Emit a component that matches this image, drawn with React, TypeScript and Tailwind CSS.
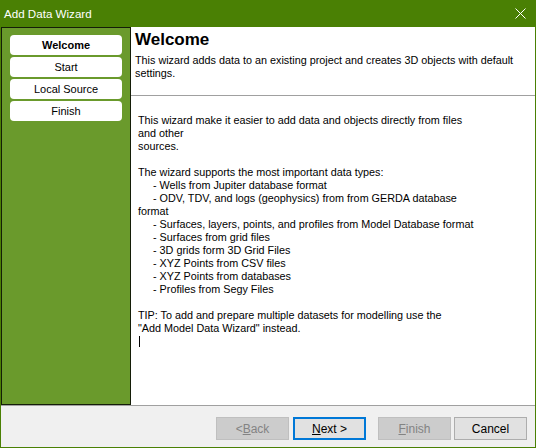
import React from 'react';

const body = '"Tahoma", "Liberation Sans", Arial, sans-serif';
const ui = '"Segoe UI", "Liberation Sans", Arial, sans-serif';

const steps = ['Welcome', 'Start', 'Local Source', 'Finish'];

// lines of the rich text box; indent = list item
const lines: { text: string; indent?: boolean }[] = [
  { text: 'This wizard make it easier to add data and objects directly from files' },
  { text: 'and other' },
  { text: 'sources.' },
  { text: '' },
  { text: 'The wizard supports the most important data types:' },
  { text: '- Wells from Jupiter database format', indent: true },
  { text: '- ODV, TDV, and logs (geophysics) from from GERDA database', indent: true },
  { text: 'format' },
  { text: '- Surfaces, layers, points, and profiles from Model Database format', indent: true },
  { text: '- Surfaces from grid files', indent: true },
  { text: '- 3D grids form 3D Grid Files', indent: true },
  { text: '- XYZ Points from CSV files', indent: true },
  { text: '- XYZ Points from databases', indent: true },
  { text: '- Profiles from Segy Files', indent: true },
  { text: '' },
  { text: 'TIP: To add and prepare multiple datasets for modelling use the' },
  { text: '"Add Model Data Wizard" instead.' },
];

function Btn({
  label,
  accel,
  rest,
  disabled,
  primary,
}: {
  label?: string;
  accel?: string;
  rest?: string;
  disabled?: boolean;
  primary?: boolean;
}) {
  const cls = disabled
    ? 'bg-[#cccccc] border border-[#bfbfbf] text-[#838383]'
    : primary
    ? 'bg-[#e1e1e1] border-2 border-[#0078d7] text-black'
    : 'bg-[#e1e1e1] border border-[#adadad] text-black';
  return (
    <div
      className={`w-[73px] h-[23px] flex items-center justify-center text-[12px] ${cls}`}
      style={{ fontFamily: ui }}
    >
      {label}
      {accel && <span className="underline">{accel}</span>}
      {rest}
    </div>
  );
}

export default function App() {
  return (
    <div className="w-[536px] h-[448px] flex flex-col bg-[#4a8004] overflow-hidden select-none">
      {/* title bar */}
      <div className="h-[27px] shrink-0 flex items-center justify-between pl-[4px] pr-[10px]">
        <span className="text-white text-[11.6px]" style={{ fontFamily: ui }}>
          Add Data Wizard
        </span>
        <svg width="11" height="11" viewBox="0 0 11 11" className="mb-[1px]">
          <path d="M0.5 0.5 L10.5 10.5 M10.5 0.5 L0.5 10.5" stroke="white" strokeWidth="1" />
        </svg>
      </div>

      <div className="flex-1 flex flex-col mx-px mb-px min-h-0">
        <div className="flex-1 flex min-h-0">
          {/* sidebar */}
          <div className="w-[130px] shrink-0 bg-[#6a9a2c] border border-[#141d08] pt-[7px] pl-[8px] flex flex-col gap-[2px]">
            {steps.map((s, i) => (
              <div
                key={s}
                className={`w-[112px] h-[20px] bg-white rounded-[4px] flex items-center justify-center text-[11px] text-black ${
                  i === 0 ? 'font-bold' : ''
                }`}
                style={{ fontFamily: body }}
              >
                {s}
              </div>
            ))}
          </div>

          {/* content */}
          <div className="flex-1 bg-white flex flex-col" style={{ fontFamily: body }}>
            <div className="pt-[3px] pl-[4px] pr-[10px]">
              <div className="text-[17px] leading-[20px] font-bold text-black" style={{ fontFamily: '"Liberation Sans", Arial, sans-serif' }}>
                Welcome
              </div>
              <div className="mt-[4px] text-[10.8px] leading-[13px] text-black">
                This wizard adds data to an existing project and creates 3D objects with default settings.
              </div>
            </div>
            <div className="mt-[15px] h-px bg-[#a0a0a0]" />
            <div className="pt-[18px] pl-[7px] text-[10.8px] leading-[13px] text-black">
              {lines.map((l, i) => (
                <div key={i} className={`h-[13px] whitespace-pre ${l.indent ? 'pl-[15px]' : ''}`}>
                  {l.text}
                </div>
              ))}
              <div className="h-[13px] flex items-center">
                <div className="w-px h-[11px] bg-black ml-px" />
              </div>
            </div>
          </div>
        </div>

        {/* button bar */}
        <div className="h-[42px] shrink-0 bg-[#f0f0f0] border-t border-[#a0a0a0] flex justify-end pt-[11px] pr-[8px]">
          <Btn label="< " accel="B" rest="ack" disabled />
          <div className="w-[4px]" />
          <Btn accel="N" rest="ext >" primary />
          <div className="w-[12px]" />
          <Btn accel="F" rest="inish" disabled />
          <div className="w-[3px]" />
          <Btn label="Cancel" />
        </div>
      </div>
    </div>
  );
}
